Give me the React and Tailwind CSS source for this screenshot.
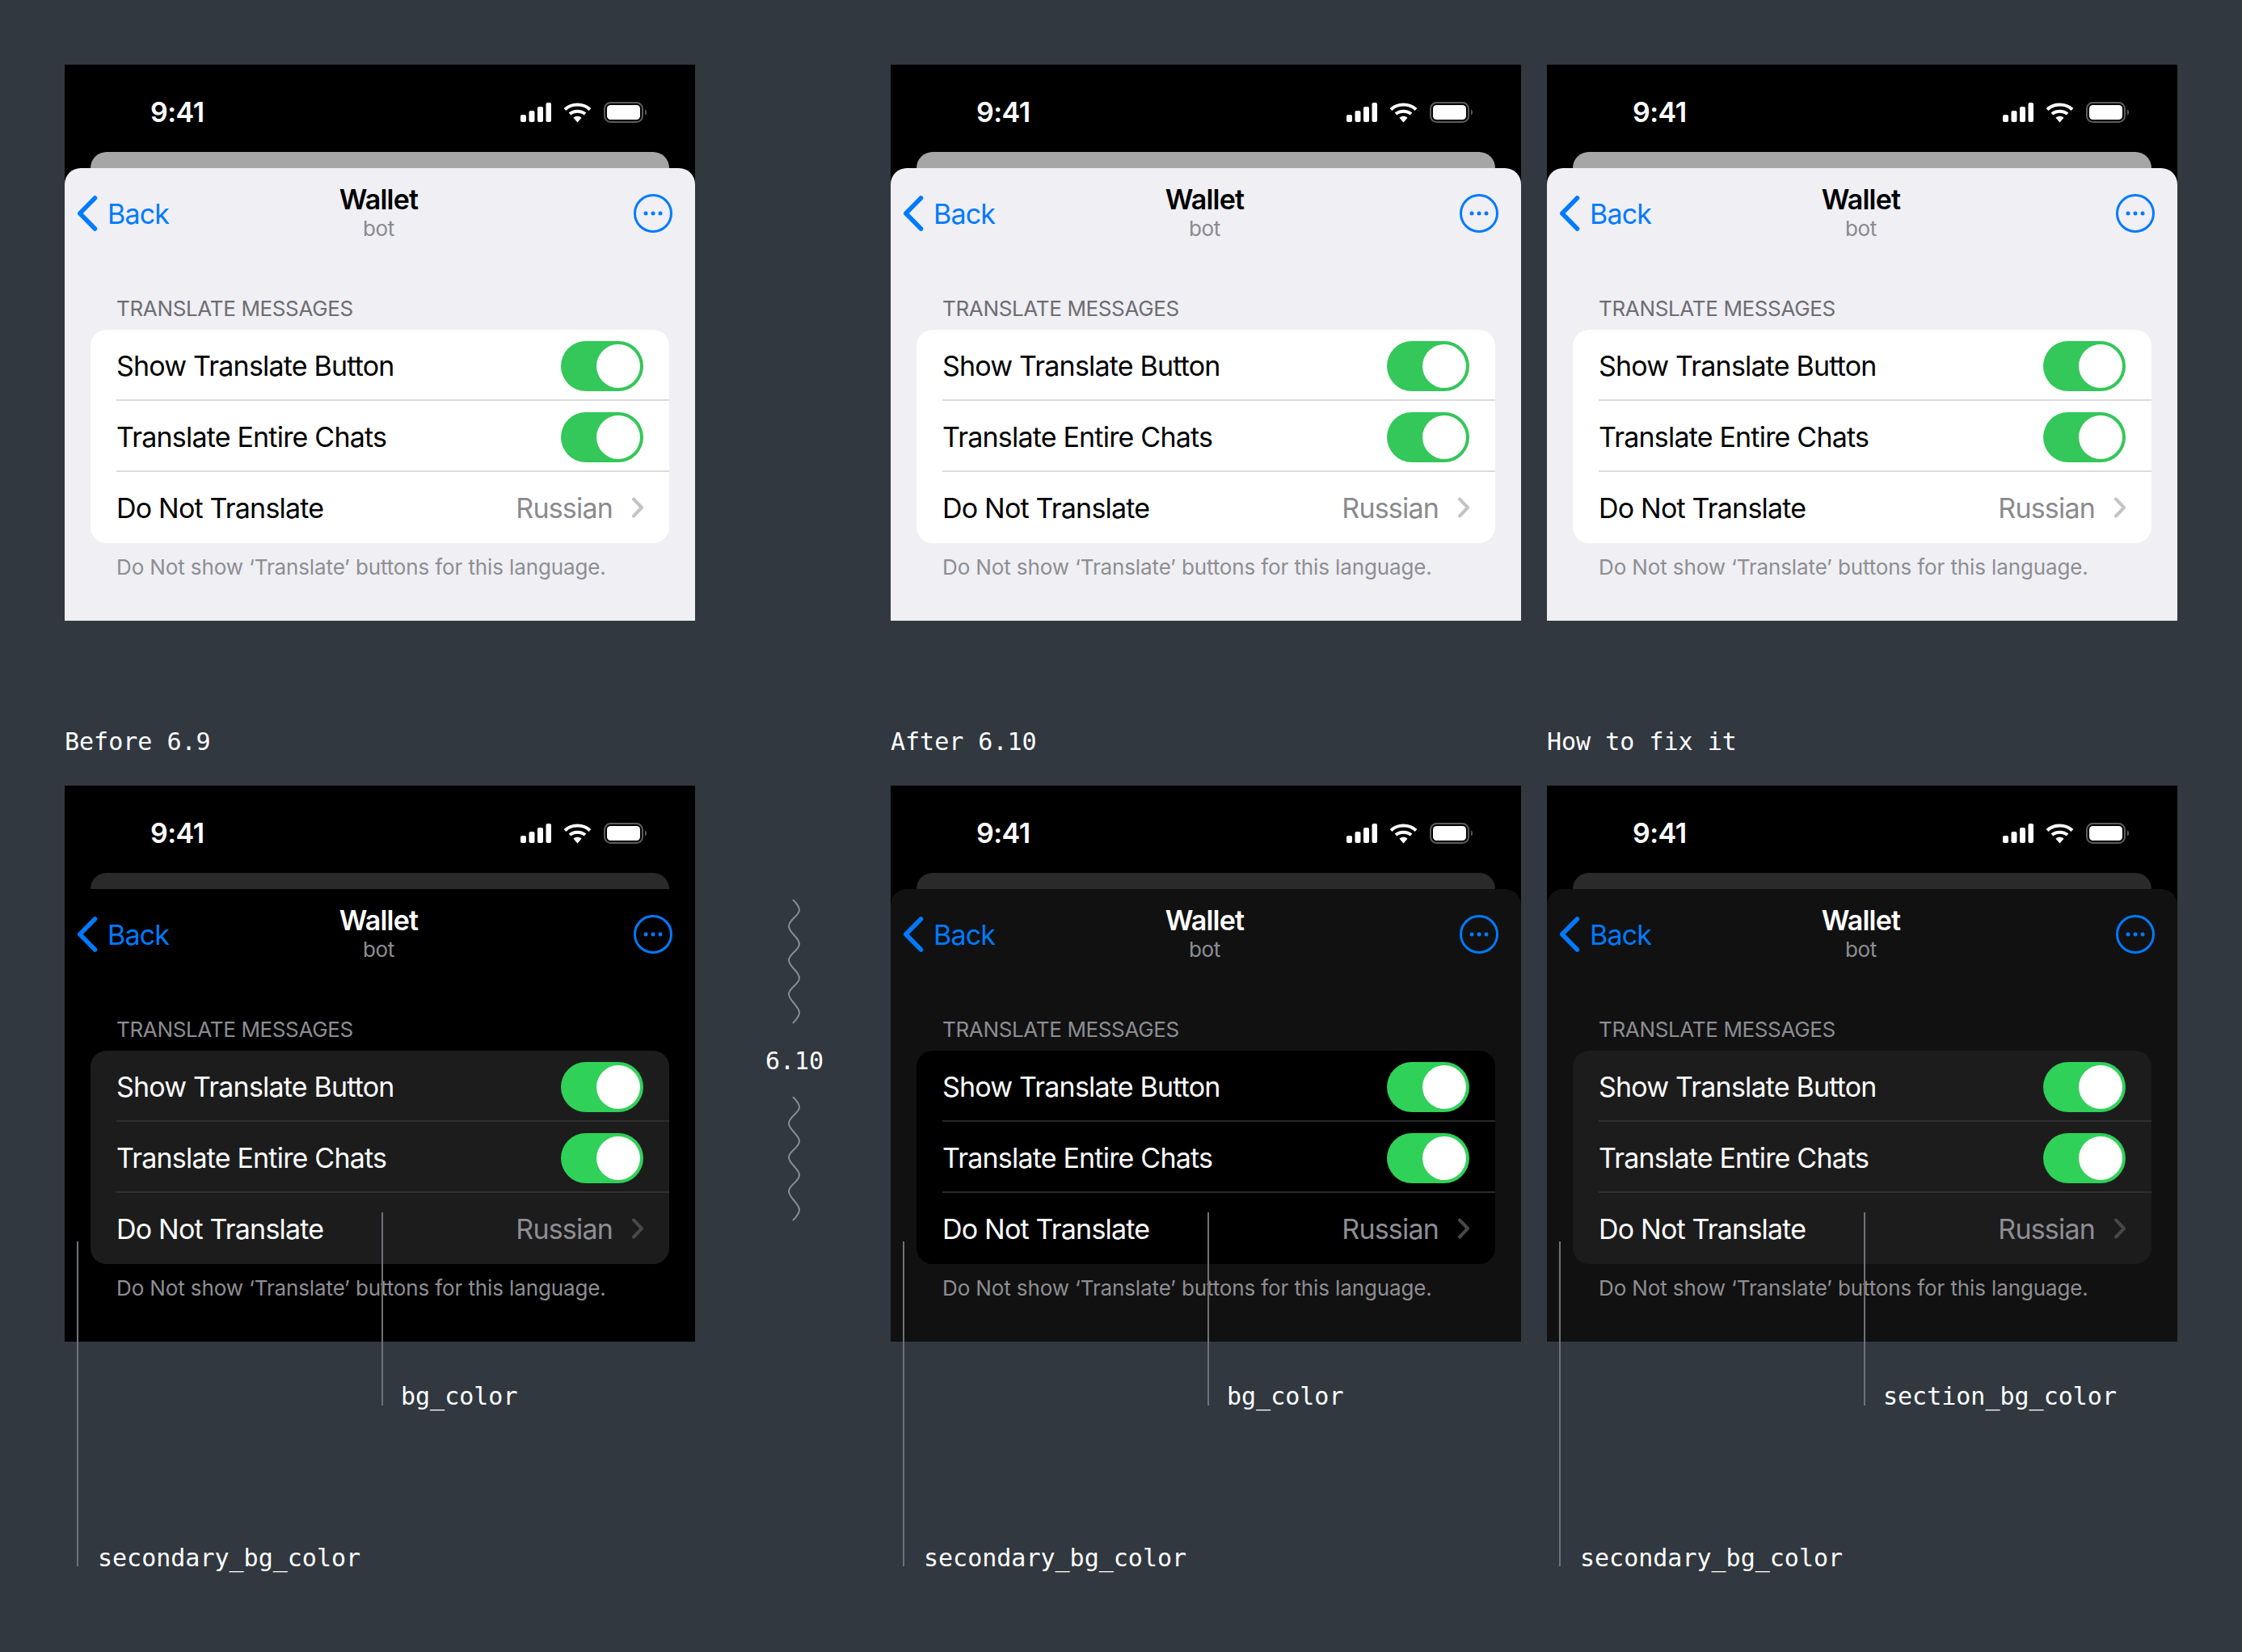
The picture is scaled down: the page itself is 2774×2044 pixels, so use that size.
import React from "react";

const LIGHT = {
    card: "bg-[#efeff4]", behind: "bg-[#a6a6a6]", section: "bg-white", title: "text-black", row: "text-black",
    divider: "bg-[#dcdcde]", value: "text-[#8a8a8e]", chevron: "#c4c4c7", caption: "text-[#6d6d72]", hint: "text-[#8e8e93]",
    knob: "bg-white", track: "bg-[#34c759]", sub: "text-[#8a8a8e]",
};
const DARK = {
    title: "text-white", row: "text-white", value: "text-[#8e8e93]", chevron: "#48484a", caption: "text-[#8d8d93]", hint: "text-[#8e8e93]",
    knob: "bg-white", track: "bg-[#30d158]", sub: "text-[#8e8e93]",
};
const BEFORE = { ...DARK, card: "bg-black", behind: "bg-[#2a2a2a]", section: "bg-[#1c1c1d]", divider: "bg-[#2f2f31]" };
const AFTER = { ...DARK, card: "bg-[#111111]", behind: "bg-[#2a2a2a]", section: "bg-black", divider: "bg-[#2a2a2b]" };
const FIX = { ...DARK, card: "bg-[#111111]", behind: "bg-[#2a2a2a]", section: "bg-[#1c1c1d]", divider: "bg-[#2f2f31]" };

const mono = "font-['DejaVu_Sans_Mono',monospace] text-[30px] leading-[36px] text-white";

const StatusBar = () => (
    <div className="flex items-center justify-between pl-[106px] pr-[60px] pt-[44px] h-[108px] pb-[34px]">
        <span className="text-white text-[34px] leading-[30px] font-semibold tracking-[-0.5px]">9:41</span>
        <div className="flex items-center">
            <svg width="38" height="24" viewBox="0 0 38 24" fill="#fff">
                <rect x="0" y="15" width="7" height="9" rx="2" />
                <rect x="10.5" y="10" width="7" height="14" rx="2" />
                <rect x="21" y="5" width="7" height="19" rx="2" />
                <rect x="31.5" y="0" width="6.5" height="24" rx="2" />
            </svg>
            <svg className="ml-[15px]" width="35" height="25" viewBox="0 0 35 25" fill="none" stroke="#fff" strokeWidth="4">
                <path d="M2 8.5C10 0.5 25 0.5 33 8.5" />
                <path d="M8 14C13 9.5 22 9.5 27 14" />
                <path d="M12.5 18.8C15.5 16.2 19.5 16.2 22.5 18.8L17.5 24.5Z" fill="#fff" stroke="none" />
            </svg>
            <svg className="ml-[15px]" width="53" height="26" viewBox="0 0 53 26" fill="none">
                <rect x="1" y="1" width="47" height="24" rx="7.5" stroke="#5c5c5e" strokeWidth="2" />
                <rect x="4" y="4" width="41" height="18" rx="4.5" fill="#fff" />
                <path d="M51 9.5C52.4 10 53 11.4 53 13C53 14.6 52.4 16 51 16.5Z" fill="#5c5c5e" />
            </svg>
        </div>
    </div>
);

const Toggle = ({ theme }) => (
    <div className={`w-[102px] h-[62px] mt-[2px] rounded-full flex items-center justify-end pr-[4px] ${theme.track}`}>
        <div className={`w-[54px] h-[54px] rounded-full ${theme.knob}`}></div>
    </div>
);

const Row = ({ theme, label, children, divider }) => (
    <div className="relative h-[88px] flex items-center justify-between pl-[32px] pr-[32px]">
        <span className={`text-[34px] tracking-[-0.8px] ${theme.row}`}>{label}</span>
        {children}
        {divider && <div className={`absolute left-[32px] right-0 bottom-0 h-[2px] ${theme.divider}`}></div>}
    </div>
);

const Phone = ({ theme }) => (
    <div className="h-[688px] bg-black flex flex-col font-['Inter',sans-serif]">
        <StatusBar />
        <div className={`mx-[32px] h-[20px] shrink-0 rounded-t-[20px] ${theme.behind}`}></div>
        <div className={`flex-1 rounded-t-[20px] ${theme.card}`}>
            <div className="mt-[24px] h-[64px] grid grid-cols-[1fr_auto_1fr] grid-rows-[64px] items-center px-[16px]">
                <div className="flex items-center">
                    <svg width="26" height="44" viewBox="0 0 26 44" fill="none" stroke="#007aff" strokeWidth="5.5" strokeLinecap="round" strokeLinejoin="round">
                        <path d="M21.5 3L2.8 22L21.5 41" />
                    </svg>
                    <span className="ml-[11px] text-[#007aff] text-[34px] tracking-[-0.8px]">Back</span>
                </div>
                <div className="flex flex-col items-center pr-[3px]">
                    <span className={`text-[34px] leading-[38px] font-semibold tracking-[-0.8px] ${theme.title}`}>Wallet</span>
                    <span className={`text-[26px] leading-[26px] mt-[4px] mb-[4px] tracking-[-0.3px] ${theme.sub}`}>bot</span>
                </div>
                <div className="flex justify-end pr-[12px]">
                    <svg width="48" height="48" viewBox="0 0 48 48" fill="#007aff">
                        <circle cx="24" cy="24" r="22.5" fill="none" stroke="#007aff" strokeWidth="3" />
                        <circle cx="15" cy="24" r="2.5" />
                        <circle cx="24" cy="24" r="2.5" />
                        <circle cx="33" cy="24" r="2.5" />
                    </svg>
                </div>
            </div>
            <div className="mx-[32px] mt-[70px]">
                <p className={`pl-[32px] text-[26px] leading-[32px] tracking-[-0.35px] mb-[10px] ${theme.caption}`}>TRANSLATE MESSAGES</p>
                <div className={`rounded-[20px] overflow-hidden ${theme.section}`}>
                    <Row theme={theme} label="Show Translate Button" divider><Toggle theme={theme} /></Row>
                    <Row theme={theme} label="Translate Entire Chats" divider><Toggle theme={theme} /></Row>
                    <Row theme={theme} label="Do Not Translate">
                        <div className="flex items-center">
                            <span className={`text-[34px] tracking-[-0.8px] ${theme.value}`}>Russian</span>
                            <svg className="ml-[22px]" width="16" height="26" viewBox="0 0 16 26" fill="none" stroke={theme.chevron} strokeWidth="4" strokeLinecap="round" strokeLinejoin="round">
                                <path d="M4 2.5L14 13L4 23.5" />
                            </svg>
                        </div>
                    </Row>
                </div>
                <p className={`pl-[32px] mt-[14px] text-[26px] leading-[32px] tracking-[-0.12px] ${theme.hint}`}>Do Not show ‘Translate’ buttons for this language.</p>
            </div>
        </div>
    </div>
);

const Wave = () => (
    <svg width="16" height="154" viewBox="0 0 16 154" fill="none" stroke="#8a8d91" strokeWidth="2">
        <path d="M6 0C11 5 14 9 14 13C14 20 1 25 1 33C1 41 14 47 14 55C14 63 1 67 1 75C1 83 14 89 14 97C14 105 1 109 1 117C1 125 14 132 14 140C14 145 9 150 6 153" />
    </svg>
);

const Annotated = ({ theme, label }) => (
    <div className="relative">
        <Phone theme={theme} />
        <div className="absolute left-[392px] top-[528px] h-[239px] w-[2px] bg-[#6e7276]"></div>
        <span className={`absolute left-[416px] top-[738px] ${mono}`}>{label}</span>
        <div className="absolute left-[15px] top-[564px] h-[402px] w-[2px] bg-[#6e7276]"></div>
        <span className={`absolute left-[41px] top-[938px] ${mono}`}>secondary_bg_color</span>
    </div>
);

const App = () => (
    <div className="w-[2774px] h-[2044px] bg-[#313840] pt-[80px] pl-[80px] overflow-hidden">
        <div className="grid grid-cols-[780px_242px_780px_32px_780px]">
            <div className="col-start-1"><Phone theme={LIGHT} /></div>
            <div className="col-start-3"><Phone theme={LIGHT} /></div>
            <div className="col-start-5"><Phone theme={LIGHT} /></div>

            <div className={`col-start-1 h-[204px] pt-[132px] ${mono}`}>Before 6.9</div>
            <div className={`col-start-3 h-[204px] pt-[132px] ${mono}`}>After 6.10</div>
            <div className={`col-start-5 h-[204px] pt-[132px] ${mono}`}>How to fix it</div>

            <div className="col-start-1"><Annotated theme={BEFORE} label="bg_color" /></div>
            <div className="col-start-2 flex flex-col items-center pt-[141px] pl-[4px]">
                <Wave />
                <span className={`mt-[28px] mb-[26px] ${mono}`}>6.10</span>
                <Wave />
            </div>
            <div className="col-start-3"><Annotated theme={AFTER} label="bg_color" /></div>
            <div className="col-start-5"><Annotated theme={FIX} label="section_bg_color" /></div>
        </div>
    </div>
);

export default App;
